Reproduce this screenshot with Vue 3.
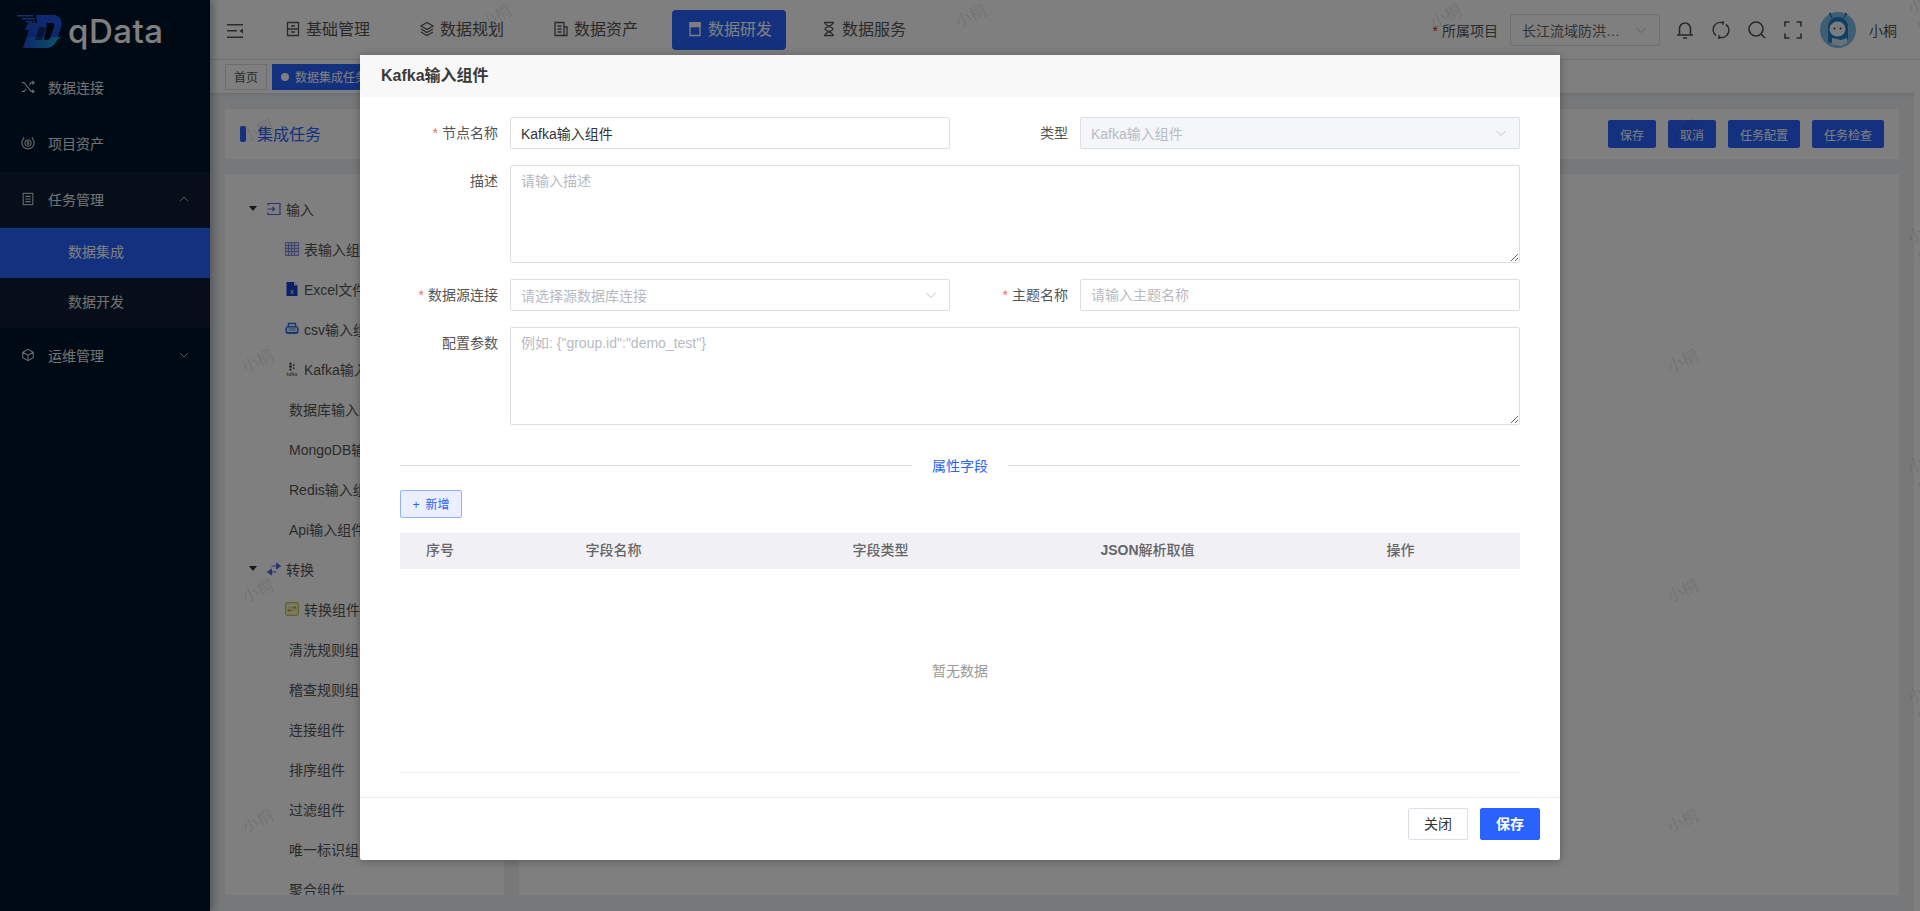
<template>
  <div class="layout">
    <aside class="sidebar">
      <div class="logo">
        <svg class="logo-mark" viewBox="0 0 46 35" width="46" height="35">
          <defs>
            <linearGradient id="logoFill" x1="0" y1="1" x2="1" y2="0.2">
              <stop offset="0" stop-color="#1449c8" />
              <stop offset="1" stop-color="#1f55e6" />
            </linearGradient>
            <linearGradient id="logoFoot" x1="0" y1="0" x2="1" y2="0">
              <stop offset="0" stop-color="#1b4fd0" />
              <stop offset="1" stop-color="#1aa6d6" />
            </linearGradient>
          </defs>
          <path d="M0 0h16v1.500H0zM5 3h13v1.500H5zM9 6h6v1.500H9zM16 6h2v1.500h-2z" fill="#2460e8" />
          <path d="M19 0h17c7 0 10 5 8 12l-4 13c-2 5-6 8-12 8H6l6-18h-4l3-7h9z" fill="url(#logoFill)" />
          <path d="M6 33l4-11h34l-4 3c-2 5-6 8-12 8z" fill="url(#logoFoot)" />
          <path d="M30 8h5c2 0 2.500 2 2 4l-3.500 10c-.6 2-2 3-4.500 3h-2z" fill="#000e1c" />
          <path d="M22 12h7l-4 13h-7z" fill="#000e1c" opacity=".55" />
        </svg>
        <span class="logo-text">qData</span>
      </div>

      <nav class="menu">
        <div class="menu-item">
          <svg class="menu-icon" viewBox="0 0 16 16"><path d="M1 3h2.500l8 10H15M1 13h2.500l2.500-3M9.500 6l2-3H15M13 1l2 2-2 2M13 11l2 2-2 2" /></svg>
          <span>数据连接</span>
        </div>
        <div class="menu-item">
          <svg class="menu-icon" viewBox="0 0 16 16"><path d="M12.500 2.500a7 7 0 1 1-9 0" /><path d="M3.500 2.500l-1-1M12.500 2.500l1-1" /><circle cx="8" cy="8" r="3.500" /><path d="M7 9.200c.6.400 2 .3 2-.6 0-1-2-.4-2-1.300 0-.7 1.300-.8 2-.4" /></svg>
          <span>项目资产</span>
        </div>
        <div class="menu-group">
          <div class="menu-item">
            <svg class="menu-icon" viewBox="0 0 16 16"><rect x="2.500" y="1.500" width="11" height="13" /><path d="M5 5h6M5 8h6M5 11h6" /></svg>
            <span>任务管理</span>
            <svg class="menu-arrow" viewBox="0 0 12 12"><path d="M2 8l4-4 4 4" /></svg>
          </div>
          <div class="menu-sub active">数据集成</div>
          <div class="menu-sub">数据开发</div>
        </div>
        <div class="menu-item">
          <svg class="menu-icon" viewBox="0 0 16 16"><path d="M8 1.500l6 3.300v6.400l-6 3.300-6-3.300V4.800zM2 4.800l6 3.400 6-3.400M8 8.200v6.300" /></svg>
          <span>运维管理</span>
          <svg class="menu-arrow" viewBox="0 0 12 12"><path d="M2 4l4 4 4-4" /></svg>
        </div>
      </nav>
    </aside>

    <div class="main">
      <header class="topbar">
        <svg class="toggler" viewBox="0 0 16 14" width="16" height="14">
          <path d="M0 0h16v1.500H0zM0 6h10v1.500H0zM0 12.500h16V14H0zM16 4.500v5l-3.500-2.500z" fill="#555" />
        </svg>
        <div class="top-nav">
          <div class="nav-item">
            <svg viewBox="0 0 14 16"><path d="M1.500 1.500h11v13h-11zM1.500 8h11M5 5h4M5 11h4" /></svg>
            <span>基础管理</span>
          </div>
          <div class="nav-item">
            <svg viewBox="0 0 16 16"><path d="M8 1.500l6 3.500-6 3.500-6-3.500zM2 8l6 3.500L14 8M2 11l6 3.500 6-3.500" /></svg>
            <span>数据规划</span>
          </div>
          <div class="nav-item">
            <svg viewBox="0 0 16 16"><path d="M2 1.500h9v13H2zM11 6h3v8.500h-3M4.500 5h4M4.500 8h4M4.500 11h4" /></svg>
            <span>数据资产</span>
          </div>
          <div class="nav-item current">
            <svg viewBox="0 0 16 16"><path d="M3 2h10v12.500H3z" /><path d="M3 2h10v3.500H3z" fill="currentColor" /></svg>
            <span>数据研发</span>
          </div>
          <div class="nav-item">
            <svg viewBox="0 0 14 16"><path d="M2 1.500h10M2 14.500h10M3 1.500c0 4 8 4 8 6.500s-8 2.500-8 6.500M11 1.500c0 4-8 4-8 6.500s8 2.500 8 6.500" /></svg>
            <span>数据服务</span>
          </div>
        </div>

        <div class="top-right">
          <span class="project-label"><i>*</i>所属项目</span>
          <div class="project-select">
            <span>长江流域防洪…</span>
            <svg class="chevron" viewBox="0 0 12 12"><path d="M1.500 4l4.500 4.500L10.500 4" /></svg>
          </div>
          <div class="tool-icons">
            <svg viewBox="0 0 18 18"><path d="M3.500 14V7.500a5.500 5.500 0 0 1 11 0V14M1 14h16M7 17h4" /></svg>
            <svg viewBox="0 0 18 18"><path d="M4 14.500A7.300 7.300 0 0 1 11 1.900M14 3.500A7.300 7.300 0 0 1 7 16.100M11 0v3.800M7 14.200V18" /></svg>
            <svg viewBox="0 0 18 18"><circle cx="8" cy="8" r="7" /><path d="M13 13l4 4" /></svg>
            <svg viewBox="0 0 18 18"><path d="M1 5.500V1h4.500M12.500 1H17v4.500M17 12.500V17h-4.500M5.500 17H1v-4.500" /></svg>
          </div>
          <svg class="avatar" viewBox="0 0 36 36" width="36" height="36">
            <circle cx="18" cy="18" r="18" fill="#7fbde8" />
            <path d="M8 31V15c0-7 5-10 10-10s10 3 10 10v13z" fill="#1f7fcb" />
            <path d="M12 6L10 2M24 6l2-4" stroke="#1f7fcb" stroke-width="1.500" fill="none" />
            <circle cx="10" cy="2" r="1.200" fill="#1f7fcb" />
            <circle cx="26" cy="2" r="1.200" fill="#1f7fcb" />
            <ellipse cx="17.500" cy="17" rx="8" ry="7.500" fill="#f4f8fb" />
            <circle cx="14.500" cy="16.500" r="1" fill="#333" />
            <circle cx="20.500" cy="16.500" r="1" fill="#333" />
            <path d="M12 26l9 2 6-2v5l-6 3-9-2z" fill="#cfe4f4" />
          </svg>
          <span class="user-name">小桐</span>
        </div>
      </header>

      <div class="tabs">
        <span class="tab">首页</span>
        <span class="tab on"><i class="dot"></i>数据集成任务编辑</span>
      </div>

      <div class="page">
        <section class="title-card">
          <div class="title"><i class="title-bar"></i><span>集成任务</span></div>
          <div class="title-actions">
            <button class="blue-btn">保存</button>
            <button class="blue-btn">取消</button>
            <button class="blue-btn">任务配置</button>
            <button class="blue-btn">任务检查</button>
          </div>
        </section>

        <section class="panels">
          <div class="tree-panel">
            <div v-for="node in treeNodes" :key="node.label" class="tree-row" :class="{ group: node.group, plain: !node.group && !node.icon }">
              <i v-if="node.group" class="caret"></i>
              <svg v-if="node.icon === 'in'" class="tree-icon" viewBox="0 0 14 14"><path d="M1 3.500V1.500h12v11H1v-2M.5 7h7M5.500 5l2 2-2 2" fill="none" stroke="#5b62e0" stroke-width="1.200" /></svg>
              <svg v-if="node.icon === 'swap'" class="tree-icon" viewBox="0 0 14 14"><path d="M4.500 4h9M9.500 1l4 3-4 3z M0.500 10h9M4.500 7l-4 3 4 3z" fill="#5b62e0" stroke="#5b62e0" /></svg>
              <svg v-if="node.icon === 'table'" class="tree-icon" viewBox="0 0 14 14"><path d="M.5.500h13v13H.5zM.5 3.500h13M.5 6.500h13M.5 9.500h13M3.500.500v13M6.500.500v13M9.500.500v13" fill="#dfe3fb" stroke="#6a78d8" stroke-width=".8" /></svg>
              <svg v-if="node.icon === 'excel'" class="tree-icon" viewBox="0 0 14 14"><path d="M1.500 0H9l3.500 3.500V14h-11z" fill="#1c3fd0" /><path d="M9 0v3.500h3.500z" fill="#dfe6ff" /><text x="7" y="11.500" class="tree-glyph">x</text></svg>
              <svg v-if="node.icon === 'csv'" class="tree-icon" viewBox="0 0 14 14"><path d="M3.500 4V1.500h7V4" fill="none" stroke="#2b6ee8" stroke-width="1.400" /><rect x=".5" y="4" width="13" height="8" rx="2.500" fill="#2b6ee8" /><rect x="2" y="5.500" width="10" height="4.500" fill="#dfe9ff" /><text x="7" y="9.300" class="tree-tiny blue">csv</text></svg>
              <svg v-if="node.icon === 'kafka'" class="tree-icon" viewBox="0 0 14 14"><circle cx="5.500" cy="1.600" r="1.200" fill="#444" /><circle cx="5.500" cy="4.600" r="1.400" fill="#444" /><circle cx="5.500" cy="7.600" r="1.200" fill="#444" /><circle cx="8.800" cy="3" r=".9" fill="#444" /><circle cx="8.800" cy="6.200" r=".9" fill="#444" /><text x="7" y="13.500" class="tree-tiny">kafka</text></svg>
              <svg v-if="node.icon === 'trans'" class="tree-icon" viewBox="0 0 14 14"><rect x=".7" y=".7" width="12.600" height="12.600" rx="1.500" fill="#f7f6c8" stroke="#c9c24f" stroke-width="1.200" /><path d="M3 5.500h6V3.500l3 3-3 0zM11 8.500H5v2l-3-3 3 0z" fill="#a0a020" /></svg>
              <span>{{ node.label }}</span>
            </div>
          </div>
          <div class="canvas-panel"></div>
        </section>
      </div>
      <div class="scroll-track"></div>
    </div>

    <span v-for="mark in watermarks" :key="mark.x + '-' + mark.y" class="watermark" :style="{ left: mark.x + 'px', top: mark.y + 'px' }">小桐</span>

    <div class="overlay">
      <div class="dialog">
        <div class="dialog-head">Kafka输入组件</div>
        <div class="dialog-body">
          <div class="form-grid">
            <div class="form-item">
              <label class="required">节点名称</label>
              <input class="field" type="text" value="Kafka输入组件" />
            </div>
            <div class="form-item">
              <label>类型</label>
              <div class="field select disabled">
                <span>Kafka输入组件</span>
                <svg class="chevron" viewBox="0 0 12 12"><path d="M1.500 4l4.500 4.500L10.500 4" /></svg>
              </div>
            </div>
            <div class="form-item wide">
              <label>描述</label>
              <textarea class="field area" placeholder="请输入描述"></textarea>
            </div>
            <div class="form-item">
              <label class="required">数据源连接</label>
              <div class="field select">
                <span>请选择源数据库连接</span>
                <svg class="chevron" viewBox="0 0 12 12"><path d="M1.500 4l4.500 4.500L10.500 4" /></svg>
              </div>
            </div>
            <div class="form-item">
              <label class="required">主题名称</label>
              <input class="field" type="text" placeholder="请输入主题名称" />
            </div>
            <div class="form-item wide">
              <label>配置参数</label>
              <textarea class="field area" placeholder='例如: {"group.id":"demo_test"}'></textarea>
            </div>
          </div>

          <div class="divider"><span>属性字段</span></div>

          <button class="add-btn"><span class="plus">+</span>新增</button>

          <div class="grid-table">
            <div class="grid-head">
              <span>序号</span>
              <span>字段名称</span>
              <span>字段类型</span>
              <span><b>JSON</b>解析取值</span>
              <span>操作</span>
            </div>
            <div class="grid-empty">暂无数据</div>
          </div>
        </div>
        <div class="dialog-foot">
          <button class="foot-btn">关闭</button>
          <button class="foot-btn primary">保存</button>
        </div>
      </div>
    </div>
  </div>
</template>

<script setup>
const treeNodes = [
  { label: '输入', group: true, icon: 'in' },
  { label: '表输入组件', icon: 'table' },
  { label: 'Excel文件输入组件', icon: 'excel' },
  { label: 'csv输入组件', icon: 'csv' },
  { label: 'Kafka输入组件', icon: 'kafka' },
  { label: '数据库输入组件' },
  { label: 'MongoDB输入组件' },
  { label: 'Redis输入组件' },
  { label: 'Api输入组件' },
  { label: '转换', group: true, icon: 'swap' },
  { label: '转换组件', icon: 'trans' },
  { label: '清洗规则组件' },
  { label: '稽查规则组件' },
  { label: '连接组件' },
  { label: '排序组件' },
  { label: '过滤组件' },
  { label: '唯一标识组件' },
  { label: '聚合组件' }
]

// 水印是交错排列的，列距 237，同列行距 230
const watermarks = []
for (let col = 0; col < 8; col++) {
  const x = 257 + col * 237.500
  const start = col % 2 === 0 ? 130 : 15
  for (let row = 0; row < 4; row++) {
    watermarks.push({ x: Math.round(x), y: start + row * 230 })
  }
}
</script>

<style>
html,
body {
  margin: 0;
  height: 100%;
  overflow: hidden;
}
</style>

<style scoped>
.layout {
  position: relative;
  display: flex;
  width: 100%;
  height: 911px;
  overflow: hidden;
  background: #eef0f4;
  font-family: "Liberation Sans", "Noto Sans CJK SC", sans-serif;
  font-size: 14px;
  color: #555;
}

/* 侧边栏 */
.sidebar {
  flex: none;
  width: 210px;
  background: #001429;
  box-shadow: 3px 0 8px rgba(0, 0, 0, 0.3);
  color: #e4e4e4;
  z-index: 1;
}

.logo {
  display: flex;
  align-items: center;
  height: 60px;
  padding: 0 0 0 17px;
  gap: 5px;
  box-sizing: border-box;
}

.logo-mark {
  margin-top: 4px;
}

.logo-text {
  font-family: Inter, "Liberation Sans", sans-serif;
  font-size: 33px;
  font-weight: 500;
  line-height: 36px;
  letter-spacing: 0.5px;
  color: #fff;
  margin-top: 2px;
}

.menu-item {
  display: flex;
  align-items: center;
  height: 56px;
  padding: 0 20px 2px 21px;
  box-sizing: border-box;
}

.menu-icon {
  flex: none;
  width: 14px;
  height: 14px;
  margin-right: 13px;
  fill: none;
  stroke: #d8d8d8;
  stroke-width: 1.200;
}

.menu-arrow {
  width: 12px;
  height: 12px;
  margin-left: auto;
  fill: none;
  stroke: #aaa;
  stroke-width: 1;
}

.menu-group {
  background: #0c1f33;
}

.menu-sub {
  height: 50px;
  line-height: 49px;
  padding-left: 68px;
}

.menu-sub.active {
  background: #2962ff;
  color: #fff;
}

/* 右侧主体 */
.main {
  position: relative;
  flex: 1;
  min-width: 0;
  display: flex;
  flex-direction: column;
}

.topbar {
  flex: none;
  display: flex;
  align-items: center;
  height: 60px;
  padding: 0 23px 0 17px;
  background: #fff;
  border-bottom: 1px solid #e8e8e8;
  box-sizing: border-box;
}

.toggler {
  flex: none;
  margin-top: 2px;
}

.top-nav {
  display: flex;
  gap: 20px;
  margin-left: 27px;
}

.nav-item {
  display: flex;
  align-items: center;
  gap: 5px;
  height: 40px;
  padding: 0 14px 4px 15px;
  border-radius: 4px;
  font-size: 16px;
  color: #555;
  box-sizing: border-box;
}

.nav-item svg {
  width: 16px;
  height: 16px;
  fill: none;
  stroke: currentColor;
  stroke-width: 1.300;
  margin-top: 3px;
}

.nav-item.current {
  background: #2962ff;
  color: #fff;
}

.top-right {
  display: flex;
  align-items: center;
  margin-left: auto;
}

.project-label {
  color: #555;
}

.project-label i {
  color: #d02020;
  font-style: normal;
  margin-right: 4px;
}

.project-select {
  display: flex;
  align-items: center;
  justify-content: space-between;
  width: 150px;
  height: 32px;
  margin-left: 12px;
  padding: 0 12px 0 11px;
  border: 1px solid #dcdfe6;
  border-radius: 2px;
  box-sizing: border-box;
  color: #666;
}

.chevron {
  width: 12px;
  height: 12px;
  fill: none;
  stroke: #c0c4cc;
  stroke-width: 1;
}

.tool-icons {
  display: flex;
  gap: 18px;
  margin-left: 16px;
}

.tool-icons svg {
  width: 18px;
  height: 18px;
  fill: none;
  stroke: #505050;
  stroke-width: 1.600;
}

.avatar {
  margin-left: 18px;
}

.user-name {
  margin-left: 13px;
  color: #555;
}

.tabs {
  flex: none;
  display: flex;
  align-items: center;
  gap: 5px;
  height: 33px;
  padding-left: 15px;
  background: #fff;
  box-shadow: 0 1px 4px rgba(0, 0, 0, 0.12);
  box-sizing: border-box;
}

.tab {
  display: flex;
  align-items: center;
  height: 26px;
  padding: 0 8px;
  border: 1px solid #d8dce5;
  font-size: 12px;
  color: #555;
  box-sizing: border-box;
}

.tab.on {
  background: #2962ff;
  border-color: #2962ff;
  color: #fff;
}

.dot {
  width: 8px;
  height: 8px;
  margin-right: 6px;
  border-radius: 50%;
  background: #fff;
}

.page {
  flex: 1;
  min-height: 0;
  display: flex;
  flex-direction: column;
  gap: 15px;
  padding: 16px 21px 16px 15px;
}

.title-card {
  flex: none;
  display: flex;
  align-items: center;
  justify-content: space-between;
  height: 50px;
  padding: 0 15px;
  background: #fff;
  box-sizing: border-box;
}

.title {
  display: flex;
  align-items: center;
  font-size: 16px;
  color: #2962ff;
}

.title span {
  margin-top: -2px;
}

.title-bar {
  width: 6px;
  height: 16px;
  margin-right: 11px;
  border-radius: 2px;
  background: #2962ff;
}

.title-actions {
  display: flex;
  gap: 12px;
}

.blue-btn {
  height: 28px;
  padding: 0 12px;
  border: none;
  border-radius: 2px;
  background: #2962ff;
  color: #fff;
  font: inherit;
  font-size: 12px;
}

.panels {
  flex: 1;
  min-height: 0;
  display: flex;
  gap: 15px;
}

.tree-panel {
  flex: none;
  width: 279px;
  padding-top: 15px;
  background: #fff;
  overflow: hidden;
  box-sizing: border-box;
}

.canvas-panel {
  flex: 1;
  background: #fff;
}

.tree-row {
  display: flex;
  align-items: center;
  height: 40px;
  padding-left: 60px;
  padding-bottom: 1px;
  white-space: nowrap;
  color: #555;
  box-sizing: border-box;
}

.tree-row.group {
  padding-left: 24px;
}

.tree-row.plain {
  padding-left: 64px;
}

.caret {
  width: 0;
  height: 0;
  margin-right: 10px;
  border-left: 4px solid transparent;
  border-right: 4px solid transparent;
  border-top: 5px solid #333;
}

.tree-icon {
  flex: none;
  width: 14px;
  height: 14px;
  margin-right: 5px;
}

.tree-glyph {
  font-size: 7px;
  fill: #fff;
  text-anchor: middle;
}

.tree-tiny {
  font-size: 4.500px;
  fill: #444;
  text-anchor: middle;
}

.tree-tiny.blue {
  fill: #2b6ee8;
}

.scroll-track {
  position: absolute;
  top: 93px;
  right: 0;
  bottom: 0;
  width: 6px;
  background: #fff;
}

.watermark {
  position: absolute;
  transform: translate(-50%, -50%) rotate(-25deg);
  font-size: 16px;
  color: rgba(0, 0, 0, 0.11);
  pointer-events: none;
  z-index: 2;
}

/* 弹窗 */
.overlay {
  position: absolute;
  inset: 0;
  z-index: 5;
  display: flex;
  justify-content: center;
  align-items: flex-start;
  padding-top: 55px;
  background: rgba(0, 0, 0, 0.5);
}

.dialog {
  display: flex;
  flex-direction: column;
  width: 1200px;
  height: 805px;
  background: #fff;
  border-radius: 2px;
  box-shadow: 0 1px 8px rgba(0, 0, 0, 0.3);
}

.dialog-head {
  flex: none;
  height: 42px;
  line-height: 42px;
  padding-left: 21px;
  background: #f8f8f8;
  font-size: 16px;
  font-weight: 600;
  color: #3a3a3a;
}

.dialog-body {
  flex: 1;
  min-height: 0;
  padding: 20px 40px 0;
}

.form-grid {
  display: grid;
  grid-template-columns: 1fr 1fr;
  gap: 16px 20px;
}

.form-item {
  display: flex;
  align-items: flex-start;
}

.form-item.wide {
  grid-column: span 2;
}

.form-item label {
  flex: none;
  width: 110px;
  padding-right: 12px;
  line-height: 32px;
  text-align: right;
  color: #555;
  box-sizing: border-box;
}

.required::before {
  content: "*";
  margin-right: 4px;
  color: #f56c6c;
}

.field {
  flex: 1;
  min-width: 0;
  height: 32px;
  margin: 0;
  padding: 0 10px;
  border: 1px solid #dcdfe6;
  border-radius: 2px;
  outline: none;
  background: #fff;
  color: #333;
  font: inherit;
  box-sizing: border-box;
}

.field::placeholder {
  color: #b8bac2;
}

.area {
  display: block;
  height: 98px;
  padding: 4px 10px;
  line-height: 22px;
}

.select {
  display: flex;
  align-items: center;
  justify-content: space-between;
  color: #b8bac2;
}

.select .chevron {
  margin-right: 2px;
}

.select.disabled {
  background: #f5f6fa;
}

.divider {
  position: relative;
  height: 1px;
  margin-top: 40px;
  background: #dcdfe6;
}

.divider span {
  position: absolute;
  left: 50%;
  top: 50%;
  transform: translate(-50%, -50%);
  margin-top: -1px;
  padding: 0 20px;
  background: #fff;
  color: #2962ff;
  white-space: nowrap;
}

.add-btn {
  display: block;
  width: 62px;
  height: 28px;
  margin-top: 24px;
  padding: 0 0 2px;
  border: 1px solid #94b1ff;
  border-radius: 2px;
  background: #eaf0ff;
  color: #2962ff;
  font: inherit;
  font-size: 12px;
}

.plus {
  margin-right: 6px;
}

.grid-table {
  margin-top: 15px;
  border-bottom: 1px solid #eeeef4;
}

.grid-head {
  display: grid;
  grid-template-columns: 80px 267px 267px 267px 1fr;
  height: 36px;
  line-height: 34px;
  background: #f0f0f5;
  text-align: center;
  color: #666;
  font-weight: 500;
}

.grid-empty {
  display: flex;
  align-items: center;
  justify-content: center;
  height: 203px;
  padding-bottom: 2px;
  color: #999;
  box-sizing: border-box;
}

.dialog-foot {
  flex: none;
  display: flex;
  justify-content: flex-end;
  gap: 12px;
  height: 63px;
  padding: 10px 20px 0 0;
  border-top: 1px solid #ebebf0;
  box-sizing: border-box;
}

.foot-btn {
  width: 60px;
  height: 32px;
  padding: 0 0 2px;
  border: 1px solid #dcdfe6;
  border-radius: 2px;
  background: #fff;
  color: #333;
  font: inherit;
}

.foot-btn.primary {
  border-color: #2962ff;
  background: #2962ff;
  color: #fff;
  font-weight: 600;
}
</style>
